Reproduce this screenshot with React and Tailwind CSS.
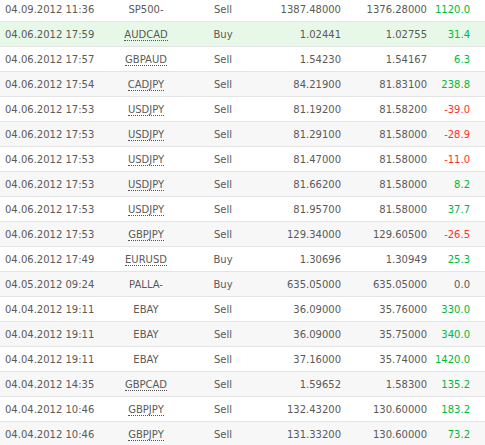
const rows = [
["04.09.2012 11:36","SP500-",0,"Sell","1387.48000","1376.28000","1120.0"],
["04.06.2012 17:59","AUDCAD",1,"Buy","1.02441","1.02755","31.4"],
["04.06.2012 17:57","GBPAUD",1,"Sell","1.54230","1.54167","6.3"],
["04.06.2012 17:54","CADJPY",1,"Sell","84.21900","81.83100","238.8"],
["04.06.2012 17:53","USDJPY",1,"Sell","81.19200","81.58200","-39.0"],
["04.06.2012 17:53","USDJPY",1,"Sell","81.29100","81.58000","-28.9"],
["04.06.2012 17:53","USDJPY",1,"Sell","81.47000","81.58000","-11.0"],
["04.06.2012 17:53","USDJPY",1,"Sell","81.66200","81.58000","8.2"],
["04.06.2012 17:53","USDJPY",1,"Sell","81.95700","81.58000","37.7"],
["04.06.2012 17:53","GBPJPY",1,"Sell","129.34000","129.60500","-26.5"],
["04.06.2012 17:49","EURUSD",1,"Buy","1.30696","1.30949","25.3"],
["04.05.2012 09:24","PALLA-",0,"Buy","635.05000","635.05000","0.0"],
["04.04.2012 19:11","EBAY",0,"Sell","36.09000","35.76000","330.0"],
["04.04.2012 19:11","EBAY",0,"Sell","36.09000","35.75000","340.0"],
["04.04.2012 19:11","EBAY",0,"Sell","37.16000","35.74000","1420.0"],
["04.04.2012 14:35","GBPCAD",1,"Sell","1.59652","1.58300","135.2"],
["04.04.2012 10:46","GBPJPY",1,"Sell","132.43200","130.60000","183.2"],
["04.04.2012 10:46","GBPJPY",1,"Sell","131.33200","130.60000","73.2"],
];
export default function App(){
  return (
    <div className="w-[485px] h-[445px] overflow-hidden bg-white text-[#5a5a5a] text-[10px]" style={{fontFamily:'"DejaVu Sans", Verdana, sans-serif'}}>
      <div className="-mt-[3px]">
        {rows.map((r,i)=>{
          const bg = i===1 ? "bg-[#e8f8e8]" : i%2 ? "bg-[#f7f7f7]" : "bg-white";
          const neg = r[6].startsWith("-");
          const zero = r[6]==="0.0";
          return (
            <div key={i} className={`flex items-center h-[25px] border-b border-[#e4e4e4] ${bg}`}>
              <div className="w-[110px] pl-[5px]">{r[0]}</div>
              <div className="w-[72px] text-center"><span className={r[2]?"border-b border-dotted border-[#555]":""}>{r[1]}</span></div>
              <div className="w-[82px] text-center">{r[3]}</div>
              <div className="w-[77px] text-right">{r[4]}</div>
              <div className="w-[86px] text-right">{r[5]}</div>
              <div className={`w-[43px] text-right ${zero?"text-[#5a5a5a]":neg?"text-[#ff3030]":"text-[#00b83a]"}`}>{r[6]}</div>
            </div>
          );
        })}
      </div>
    </div>
  );
}
